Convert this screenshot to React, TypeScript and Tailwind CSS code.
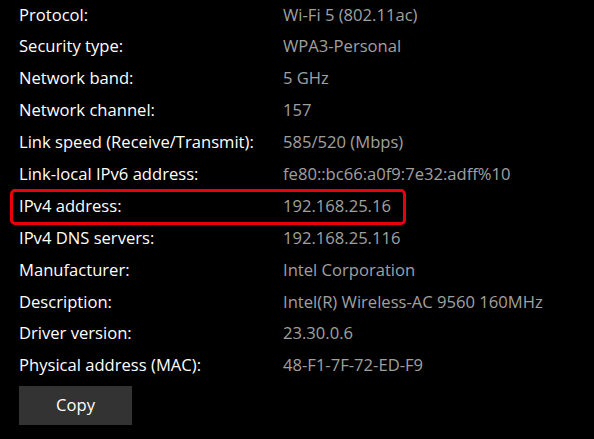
const rows: [string, string][] = [
  ["Protocol:", "Wi-Fi 5 (802.11ac)"],
  ["Security type:", "WPA3-Personal"],
  ["Network band:", "5 GHz"],
  ["Network channel:", "157"],
  ["Link speed (Receive/Transmit):", "585/520 (Mbps)"],
  ["Link-local IPv6 address:", "fe80::bc66:a0f9:7e32:adff%10"],
  ["IPv4 address:", "192.168.25.16"],
  ["IPv4 DNS servers:", "192.168.25.116"],
  ["Manufacturer:", "Intel Corporation"],
  ["Description:", "Intel(R) Wireless-AC 9560 160MHz"],
  ["Driver version:", "23.30.0.6"],
  ["Physical address (MAC):", "48-F1-7F-72-ED-F9"],
];

export default function App() {
  return (
    <div
      className="w-[594px] h-[439px] bg-black overflow-hidden pl-[19px]"
      style={{ fontFamily: '"Open Sans", "Noto Sans", sans-serif' }}
    >
      <div className="flex flex-col -mt-[1px]">
        {rows.map(([label, value]) => (
          <div key={label} className="relative flex items-center h-[31.9px] text-[16.6px]">
            {label === "IPv4 address:" && (
              <div className="absolute left-[-9px] top-[-1px] w-[396px] h-[36px] border-[3px] border-[#e8000d] rounded-[5px]" />
            )}
            <span className="w-[264px] shrink-0 text-white">{label}</span>
            <span className="text-[#a0a0a0]">{value}</span>
          </div>
        ))}
      </div>
      <button className="mt-[4px] w-[113px] h-[39px] bg-[#333333] text-white text-[16.6px]">
        Copy
      </button>
    </div>
  );
}
